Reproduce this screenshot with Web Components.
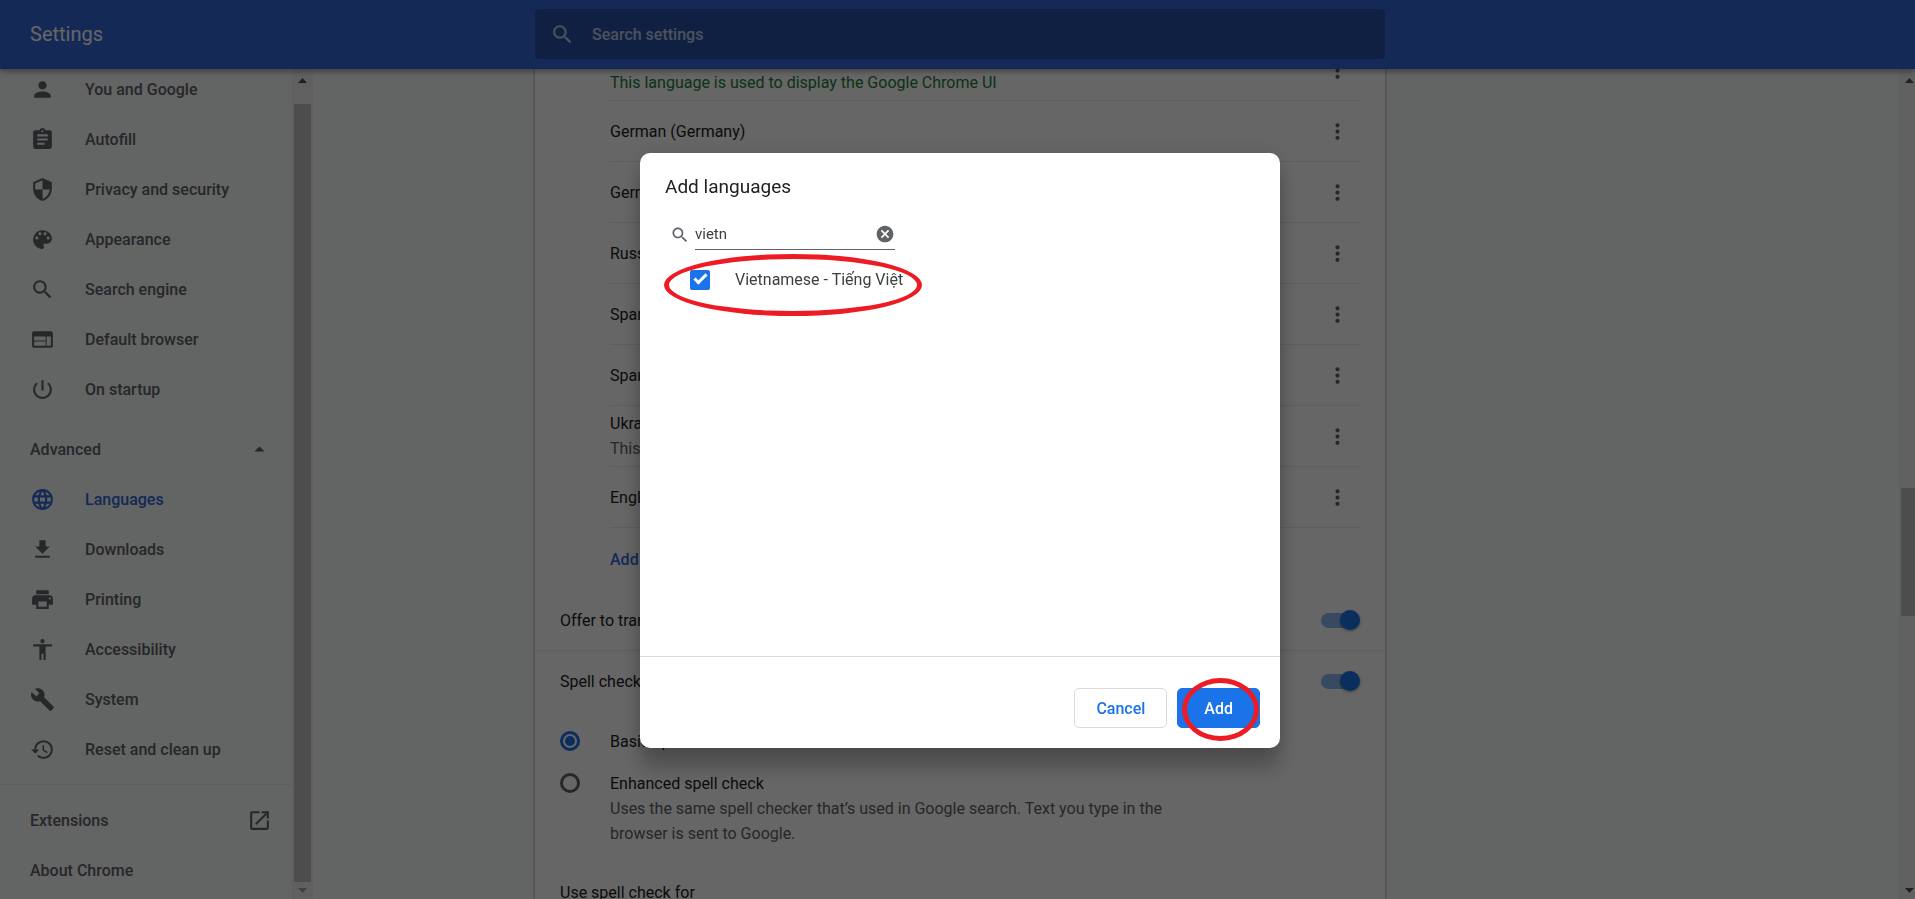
<!DOCTYPE html>
<html lang="en">
<head>
<meta charset="utf-8">
<title>Settings - Languages</title>
<style>
  html, body {
    height: 100%;
    margin: 0;
  }

  body {
    overflow: hidden;
    font-family: Roboto, "Liberation Sans", sans-serif;
    font-size: 16px;
    line-height: 25px;
    color: #202124;
    --blue: #1a73e8;
    --link: #3367d6;
    --grey: #5f6368;
    --card-width: 850px;
  }
</style>
</head>
<body>
<settings-app></settings-app>

<script>
const ICONS = {
  person: 'M12 12c2.21 0 4-1.79 4-4s-1.79-4-4-4-4 1.79-4 4 1.79 4 4 4zm0 2c-2.67 0-8 1.34-8 4v2h16v-2c0-2.66-5.33-4-8-4z',
  assignment: 'M19 3h-4.18C14.4 1.84 13.3 1 12 1c-1.3 0-2.4.84-2.82 2H5c-1.1 0-2 .9-2 2v14c0 1.1.9 2 2 2h14c1.1 0 2-.9 2-2V5c0-1.1-.9-2-2-2zm-7 0c.55 0 1 .45 1 1s-.45 1-1 1-1-.45-1-1 .45-1 1-1zm2 14H7v-2h7v2zm3-4H7v-2h10v2zm0-4H7V7h10v2z',
  security: 'M12 1L3 5v6c0 5.55 3.84 10.74 9 12 5.16-1.26 9-6.45 9-12V5l-9-4zm0 10.99h7c-.53 4.12-3.28 7.79-7 8.94V12H5V6.3l7-3.11v8.8z',
  palette: 'M12 3c-4.97 0-9 4.03-9 9s4.03 9 9 9c.83 0 1.5-.67 1.5-1.5 0-.39-.15-.74-.39-1.01-.23-.26-.38-.61-.38-.99 0-.83.67-1.5 1.5-1.5H16c2.76 0 5-2.24 5-5 0-4.42-4.03-8-9-8zm-5.5 9c-.83 0-1.5-.67-1.5-1.5S5.67 9 6.5 9 8 9.67 8 10.5 7.33 12 6.5 12zm3-4C8.67 8 8 7.33 8 6.5S8.67 5 9.5 5s1.5.67 1.5 1.5S10.33 8 9.5 8zm5 0c-.83 0-1.5-.67-1.5-1.5S13.67 5 14.5 5s1.5.67 1.5 1.5S15.33 8 14.5 8zm3 4c-.83 0-1.5-.67-1.5-1.5S16.67 9 17.5 9s1.5.67 1.5 1.5-.67 1.5-1.5 1.5z',
  search: 'M15.5 14h-.79l-.28-.27C15.41 12.59 16 11.11 16 9.5 16 5.91 13.09 3 9.5 3S3 5.91 3 9.5 5.91 16 9.5 16c1.61 0 3.09-.59 4.23-1.57l.27.28v.79l5 4.99L20.49 19l-4.99-5zm-6 0C7.01 14 5 11.99 5 9.5S7.01 5 9.5 5 14 7.01 14 9.5 11.99 14 9.5 14z',
  web: 'M20 4H4c-1.1 0-1.99.9-1.99 2L2 18c0 1.1.9 2 2 2h16c1.1 0 2-.9 2-2V6c0-1.1-.9-2-2-2zm-5 14H4v-4h11v4zm0-5H4V9h11v4zm5 5h-4V9h4v9z',
  power: 'M13 3h-2v10h2V3zm4.83 2.17l-1.42 1.42C17.99 7.86 19 9.81 19 12c0 3.87-3.13 7-7 7s-7-3.13-7-7c0-2.19 1.01-4.14 2.58-5.42L6.17 5.17C4.23 6.82 3 9.26 3 12c0 4.97 4.03 9 9 9s9-4.03 9-9c0-2.74-1.23-5.18-3.17-6.83z',
  up: 'M7 14l5-5 5 5z',
  language: 'M11.99 2C6.47 2 2 6.48 2 12s4.47 10 9.99 10C17.52 22 22 17.52 22 12S17.52 2 11.99 2zm6.93 6h-2.95c-.32-1.25-.78-2.45-1.38-3.56 1.84.63 3.37 1.91 4.33 3.56zM12 4.04c.83 1.2 1.48 2.53 1.91 3.96h-3.82c.43-1.43 1.08-2.76 1.91-3.96zM4.26 14C4.1 13.36 4 12.69 4 12s.1-1.36.26-2h3.38c-.08.66-.14 1.32-.14 2 0 .68.06 1.34.14 2H4.26zm.82 2h2.95c.32 1.25.78 2.45 1.38 3.56-1.84-.63-3.37-1.9-4.33-3.56zm2.95-8H5.08c.96-1.66 2.49-2.93 4.33-3.56C8.81 5.55 8.35 6.75 8.03 8zM12 19.96c-.83-1.2-1.48-2.53-1.91-3.96h3.82c-.43 1.43-1.08 2.76-1.91 3.96zM14.34 14H9.66c-.09-.66-.16-1.32-.16-2 0-.68.07-1.35.16-2h4.68c.09.65.16 1.32.16 2 0 .68-.07 1.34-.16 2zm.25 5.56c.6-1.11 1.06-2.31 1.38-3.56h2.95c-.96 1.65-2.49 2.93-4.33 3.56zM16.36 14c.08-.66.14-1.32.14-2 0-.68-.06-1.34-.14-2h3.38c.16.64.26 1.31.26 2s-.1 1.36-.26 2h-3.38z',
  download: 'M19 9h-4V3H9v6H5l7 7 7-7zM5 18v2h14v-2H5z',
  print: 'M19 8H5c-1.66 0-3 1.34-3 3v6h4v4h12v-4h4v-6c0-1.66-1.34-3-3-3zm-3 11H8v-5h8v5zm3-7c-.55 0-1-.45-1-1s.45-1 1-1 1 .45 1 1-.45 1-1 1zm-1-9H6v4h12V3z',
  accessibility: 'M12 2c1.1 0 2 .9 2 2s-.9 2-2 2-2-.9-2-2 .9-2 2-2zm9 7h-6v13h-2v-6h-2v6H9V9H3V7h18v2z',
  build: 'M22.7 19l-9.1-9.1c.9-2.3.4-5-1.5-6.9-2-2-5-2.4-7.4-1.3L9 6 6 9 1.6 4.7C.4 7.1.9 10.1 2.9 12.1c1.9 1.9 4.6 2.4 6.9 1.5l9.1 9.1c.4.4 1 .4 1.4 0l2.3-2.3c.5-.4.5-1.1.1-1.4z',
  restore: 'M13 3a9 9 0 0 0-9 9H1l3.89 3.89.07.14L9 12H6c0-3.87 3.13-7 7-7s7 3.13 7 7-3.13 7-7 7c-1.93 0-3.68-.79-4.94-2.06l-1.42 1.42A8.954 8.954 0 0 0 13 21a9 9 0 0 0 0-18zm-1 5v5l4.28 2.54.72-1.21-3.5-2.08V8H12z',
  launch: 'M19 19H5V5h7V3H5c-1.11 0-2 .9-2 2v14c0 1.1.89 2 2 2h14c1.1 0 2-.9 2-2v-7h-2v7zM14 3v2h3.59l-9.83 9.83 1.41 1.41L19 6.41V10h2V3h-7z',
  more: 'M12 8c1.1 0 2-.9 2-2s-.9-2-2-2-2 .9-2 2 .9 2 2 2zm0 2c-1.1 0-2 .9-2 2s.9 2 2 2 2-.9 2-2-.9-2-2-2zm0 6c-1.1 0-2 .9-2 2s.9 2 2 2 2-.9 2-2-.9-2-2-2z',
  cancel: 'M12 2C6.47 2 2 6.47 2 12s4.47 10 10 10 10-4.47 10-10S17.53 2 12 2zm5 13.59L15.59 17 12 13.41 8.41 17 7 15.59 10.59 12 7 8.41 8.41 7 12 10.59 15.59 7 17 8.41 13.41 12 17 15.59z'
};

class SettingsIcon extends HTMLElement {
  constructor() {
    super();
    this.attachShadow({ mode: 'open' });
  }

  connectedCallback() {
    this.shadowRoot.innerHTML = `
      <style>
        :host { display: block; flex: none; width: 25px; height: 25px; }
        svg { display: block; width: 100%; height: 100%; fill: currentColor; }
      </style>
      <svg viewBox="0 0 24 24" aria-hidden="true"><path d="${ICONS[this.getAttribute('name')]}"/></svg>
    `;
  }
}
customElements.define('settings-icon', SettingsIcon);

class SettingsToolbar extends HTMLElement {
  constructor() {
    super();
    this.attachShadow({ mode: 'open' });
  }

  connectedCallback() {
    this.shadowRoot.innerHTML = `
      <style>
        :host {
          display: grid;
          grid-template-columns: 1fr minmax(0, var(--card-width)) 1fr;
          align-items: center;
          height: 68px;
          padding: 0 0 1px 5px;
          background: #3367d6;
          color: #fff;
          box-shadow: 0 2px 6px rgba(0, 0, 0, .4);
          position: relative;
          z-index: 1;
        }
        h1 { margin: 0; padding-left: 25px; font-size: 20px; font-weight: 400; }
        label {
          display: flex;
          align-items: center;
          gap: 17px;
          height: 50px;
          padding: 0 15px;
          border-radius: 3px;
          background: rgba(0, 0, 0, .22);
        }
        settings-icon, input::placeholder { color: #fff; opacity: .7; }
        input {
          flex: 1;
          min-width: 0;
          padding: 0;
          border: 0;
          outline: 0;
          background: none;
          color: #fff;
          font: inherit;
          font-weight: 500;
        }
      </style>
      <h1>Settings</h1>
      <label>
        <settings-icon name="search"></settings-icon>
        <input type="text" placeholder="Search settings" aria-label="Search settings">
      </label>
    `;
  }
}
customElements.define('settings-toolbar', SettingsToolbar);

class MenuItem extends HTMLElement {
  constructor() {
    super();
    this.attachShadow({ mode: 'open' });
  }

  connectedCallback() {
    const icon = this.getAttribute('icon');
    const end = this.getAttribute('end-icon');
    this.shadowRoot.innerHTML = `
      <style>
        :host { display: block; color: var(--grey); font-weight: 500; }
        :host([active]) { color: var(--link); }
        a {
          display: flex;
          align-items: center;
          gap: 30px;
          height: 50px;
          padding: 0 20px 0 30px;
          color: inherit;
          text-decoration: none;
        }
        span { flex: 1; }
      </style>
      <a href="#">
        ${icon ? `<settings-icon name="${icon}"></settings-icon>` : ''}
        <span><slot></slot></span>
        ${end ? `<settings-icon name="${end}"></settings-icon>` : ''}
      </a>
    `;
  }
}
customElements.define('menu-item', MenuItem);

class SettingsMenu extends HTMLElement {
  constructor() {
    super();
    this.attachShadow({ mode: 'open' });
  }

  connectedCallback() {
    this.shadowRoot.innerHTML = `
      <style>
        :host { display: block; flex: 1; overflow: hidden; }
        /* the list is scrolled a little under the toolbar */
        nav { margin-top: -5px; }
        .advanced { margin-top: 10px; }
        hr { margin: 10px 0; border: 0; border-top: 1px solid #e8eaed; }
      </style>
      <nav>
        <menu-item icon="person">You and Google</menu-item>
        <menu-item icon="assignment">Autofill</menu-item>
        <menu-item icon="security">Privacy and security</menu-item>
        <menu-item icon="palette">Appearance</menu-item>
        <menu-item icon="search">Search engine</menu-item>
        <menu-item icon="web">Default browser</menu-item>
        <menu-item icon="power">On startup</menu-item>
        <menu-item class="advanced" end-icon="up">Advanced</menu-item>
        <menu-item icon="language" active>Languages</menu-item>
        <menu-item icon="download">Downloads</menu-item>
        <menu-item icon="print">Printing</menu-item>
        <menu-item icon="accessibility">Accessibility</menu-item>
        <menu-item icon="build">System</menu-item>
        <menu-item icon="restore">Reset and clean up</menu-item>
        <hr>
        <menu-item end-icon="launch">Extensions</menu-item>
        <menu-item>About Chrome</menu-item>
      </nav>
    `;
  }
}
customElements.define('settings-menu', SettingsMenu);

/* before / size / after: how the track divides round the thumb */
class ScrollTrack extends HTMLElement {
  constructor() {
    super();
    this.attachShadow({ mode: 'open' });
  }

  connectedCallback() {
    const [before, size, after] = this.getAttribute('split').split(' ');
    this.shadowRoot.innerHTML = `
      <style>
        :host {
          display: flex;
          flex-direction: column;
          flex: none;
          width: 21px;
          box-sizing: border-box;
          padding: 0 2px;
          background: #f1f1f1;
        }
        svg { display: block; flex: none; width: 17px; height: 17px; fill: #505050; }
        .off { fill: #a3a3a3; }
        .thumb { background: #c1c1c1; }
      </style>
      <svg viewBox="0 0 17 17"><path d="M4 14h9L8.500 9z"/></svg>
      <div style="flex: ${before}"></div>
      <div class="thumb" style="flex: ${size}"></div>
      <div style="flex: ${after}"></div>
      <svg class="${this.hasAttribute('at-end') ? 'off' : ''}" viewBox="0 0 17 17"><path d="M4 6h9l-4.500 5z"/></svg>
    `;
  }
}
customElements.define('scroll-track', ScrollTrack);

class LanguageRow extends HTMLElement {
  constructor() {
    super();
    this.attachShadow({ mode: 'open' });
  }

  connectedCallback() {
    const note = this.getAttribute('note');
    this.shadowRoot.innerHTML = `
      <style>
        :host {
          display: flex;
          align-items: center;
          height: 60px;
          border-bottom: 1px solid #e8eaed;
        }
        .text { flex: 1; }
        .note { color: var(--grey); }
        :host([current]) .note { color: #188038; }
        button {
          display: grid;
          place-items: center;
          width: 45px;
          height: 45px;
          padding: 0;
          border: 0;
          background: none;
          color: var(--grey);
        }
      </style>
      <div class="text">
        <div><slot></slot></div>
        ${note ? `<div class="note">${note}</div>` : ''}
      </div>
      <button type="button" aria-label="More actions"><settings-icon name="more"></settings-icon></button>
    `;
  }
}
customElements.define('language-row', LanguageRow);

class ToggleRow extends HTMLElement {
  constructor() {
    super();
    this.attachShadow({ mode: 'open' });
  }

  connectedCallback() {
    this.shadowRoot.innerHTML = `
      <style>
        :host { display: block; }
        label {
          display: flex;
          align-items: center;
          justify-content: space-between;
          height: 60px;
          padding: 0 25px;
        }
        input {
          appearance: none;
          display: flex;
          align-items: center;
          justify-content: flex-end;
          width: 39px;
          height: 15px;
          margin: 0;
          border-radius: 8px;
          background: rgba(26, 115, 232, .5);
        }
        input::before {
          content: "";
          width: 20px;
          height: 20px;
          flex: none;
          border-radius: 50%;
          background: var(--blue);
          box-shadow: 0 1px 3px rgba(0, 0, 0, .4);
        }
      </style>
      <label><span><slot></slot></span><input type="checkbox" role="switch" checked></label>
    `;
  }
}
customElements.define('toggle-row', ToggleRow);

class RadioRow extends HTMLElement {
  constructor() {
    super();
    this.attachShadow({ mode: 'open' });
  }

  connectedCallback() {
    const note = this.getAttribute('note');
    this.shadowRoot.innerHTML = `
      <style>
        :host { display: block; padding: 9px 25px 8px; }
        label { display: flex; gap: 30px; }
        input {
          appearance: none;
          display: grid;
          place-items: center;
          flex: none;
          box-sizing: border-box;
          width: 20px;
          height: 20px;
          margin: 2px 0 0;
          border: 3px solid var(--grey);
          border-radius: 50%;
        }
        input:checked { border-color: var(--blue); }
        input:checked::before {
          content: "";
          width: 10px;
          height: 10px;
          border-radius: 50%;
          background: var(--blue);
        }
        .text { max-width: 600px; }
        .note { display: block; color: var(--grey); }
      </style>
      <label>
        <input type="radio" name="spelling" ${this.hasAttribute('checked') ? 'checked' : ''}>
        <span class="text">
          <slot></slot>
          ${note ? `<span class="note">${note}</span>` : ''}
        </span>
      </label>
    `;
  }
}
customElements.define('radio-row', RadioRow);

class LanguagesCard extends HTMLElement {
  constructor() {
    super();
    this.attachShadow({ mode: 'open' });
  }

  connectedCallback() {
    this.shadowRoot.innerHTML = `
      <style>
        :host {
          display: block;
          background: #fff;
          box-shadow: 0 0 2px 1px rgba(60, 64, 67, .3);
        }
        /* the page is scrolled: the first row starts under the toolbar */
        .languages { margin-top: -29px; padding: 0 25px 0 75px; }
        .add { display: flex; align-items: center; height: 62px; }
        a { color: var(--link); font-weight: 500; text-decoration: none; }
        .spelling { border-top: 1px solid #e8eaed; }
        .choices { padding: 9px 0; }
        .more { padding: 17px 25px; }
      </style>
      <div class="languages">
        <language-row current note="This language is used to display the Google Chrome UI">English (United States)</language-row>
        <language-row>German (Germany)</language-row>
        <language-row>German</language-row>
        <language-row>Russian</language-row>
        <language-row>Spanish (Spain)</language-row>
        <language-row>Spanish</language-row>
        <language-row note="This language is used when translating pages">Ukrainian</language-row>
        <language-row>English</language-row>
        <div class="add"><a href="#">Add languages</a></div>
      </div>
      <toggle-row>Offer to translate pages that aren’t in a language you read</toggle-row>
      <div class="spelling">
        <toggle-row>Spell check</toggle-row>
        <div class="choices">
          <radio-row checked>Basic spell check</radio-row>
          <radio-row note="Uses the same spell checker that’s used in Google search. Text you type in the browser is sent to Google.">Enhanced spell check</radio-row>
        </div>
      </div>
      <div class="more">Use spell check for</div>
    `;
  }
}
customElements.define('languages-card', LanguagesCard);

class AddLanguagesDialog extends HTMLElement {
  constructor() {
    super();
    this.attachShadow({ mode: 'open' });
  }

  connectedCallback() {
    this.shadowRoot.innerHTML = `
      <style>
        :host {
          display: flex;
          align-items: center;
          justify-content: center;
          position: fixed;
          inset: 0;
          z-index: 2;
          padding: 2px 0 0 5px;
          background: rgba(0, 0, 0, .6);
        }
        .dialog {
          position: relative;
          width: 640px;
          border-radius: 10px;
          background: #fff;
          box-shadow: 0 0 20px rgba(0, 0, 0, .12), 0 20px 20px rgba(0, 0, 0, .24);
        }
        h2 {
          margin: 0;
          padding: 20px 25px 18px;
          font-size: 19px;
          font-weight: 400;
          line-height: 28px;
        }
        .search {
          display: flex;
          align-items: center;
          gap: 5px;
          padding-left: 30px;
          color: var(--grey);
        }
        settings-icon { width: 20px; height: 20px; }
        .field {
          display: flex;
          align-items: center;
          width: 200px;
          height: 31px;
          box-sizing: border-box;
          border-bottom: 1px solid var(--grey);
        }
        .field input {
          flex: 1;
          min-width: 0;
          padding: 0;
          border: 0;
          outline: 0;
          background: none;
          color: #3c4043;
          font: inherit;
          font-size: 15px;
        }
        .field button { padding: 0; border: 0; background: none; color: inherit; }
        .list { min-height: 407px; border-bottom: 1px solid #dadce0; box-sizing: border-box; }
        .option {
          display: flex;
          align-items: center;
          gap: 25px;
          padding: 17px 50px;
          color: #3c4043;
        }
        .option input {
          appearance: none;
          width: 20px;
          height: 20px;
          margin: 0;
          border-radius: 2px;
          background: var(--blue);
          display: grid;
          place-items: center;
        }
        /* tick */
        .option input::before {
          content: "";
          width: 10px;
          height: 4px;
          margin-bottom: 5px;
          border: solid #fff;
          border-width: 0 0 3px 3px;
          transform: rotate(-45deg);
        }
        .actions {
          display: flex;
          justify-content: flex-end;
          gap: 10px;
          padding: 31px 20px 20px;
        }
        .actions button {
          height: 40px;
          padding: 0 21px;
          border: 1px solid #dadce0;
          border-radius: 5px;
          background: #fff;
          color: var(--blue);
          font: inherit;
          font-weight: 500;
        }
        .actions .add {
          padding: 0 26px;
          border-color: var(--blue);
          background: var(--blue);
          color: #fff;
        }
        .ring {
          position: absolute;
          box-sizing: border-box;
          border: 5px solid #ed1c24;
          border-radius: 50%;
          pointer-events: none;
        }
        .ring.result { left: 24px; top: 101px; width: 258px; height: 62px; }
        .ring.confirm { right: 21px; bottom: 7px; width: 77px; height: 63px; }
      </style>
      <div class="dialog" role="dialog" aria-labelledby="title">
        <h2 id="title">Add languages</h2>
        <div class="search">
          <settings-icon name="search"></settings-icon>
          <div class="field">
            <input type="text" value="vietn" aria-label="Search languages">
            <button type="button" aria-label="Clear search"><settings-icon name="cancel"></settings-icon></button>
          </div>
        </div>
        <div class="list">
          <label class="option"><input type="checkbox" checked><span>Vietnamese - Tiếng Việt</span></label>
        </div>
        <div class="actions">
          <button type="button">Cancel</button>
          <button type="button" class="add">Add</button>
        </div>
        <div class="ring result"></div>
        <div class="ring confirm"></div>
      </div>
    `;
  }
}
customElements.define('add-languages-dialog', AddLanguagesDialog);

class SettingsApp extends HTMLElement {
  constructor() {
    super();
    this.attachShadow({ mode: 'open' });
  }

  connectedCallback() {
    this.shadowRoot.innerHTML = `
      <style>
        :host {
          display: flex;
          flex-direction: column;
          height: 100vh;
          background: #f8f9fa;
        }
        main {
          flex: 1;
          min-height: 0;
          display: grid;
          grid-template-columns: 1fr minmax(0, var(--card-width)) 1fr;
          padding-left: 5px;
        }
        .side { display: flex; width: 313px; margin-left: -5px; min-height: 0; }
        .page { min-height: 0; }
        .end { display: flex; justify-content: flex-end; }
        .end scroll-track { width: 16px; padding-right: 0; }
      </style>
      <settings-toolbar></settings-toolbar>
      <main>
        <div class="side">
          <settings-menu></settings-menu>
          <scroll-track split="18 777 0" at-end></scroll-track>
        </div>
        <div class="page"><languages-card></languages-card></div>
        <div class="end"><scroll-track split="402 128 266"></scroll-track></div>
      </main>
      <add-languages-dialog></add-languages-dialog>
    `;
  }
}
customElements.define('settings-app', SettingsApp);
</script>
</body>
</html>
